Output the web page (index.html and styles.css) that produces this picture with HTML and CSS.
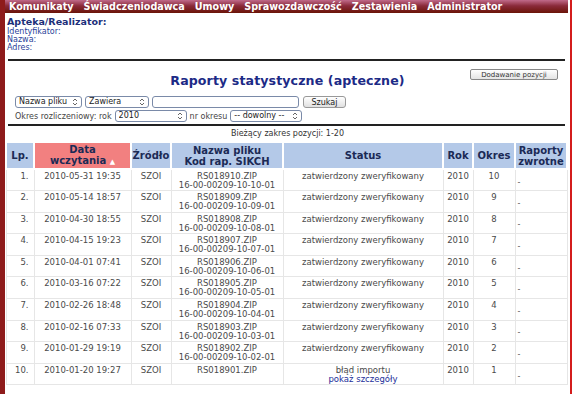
FILE: index.html
```html
<!DOCTYPE html>
<html lang="pl">
<head>
	<meta charset="UTF-8">
	<title>Raporty statystyczne (apteczne)</title>
	<link rel="stylesheet" href="styles.css">
</head>
<body>
	<div class="page">
		<div class="menu">
			<a href="#">Komunikaty</a>
			<a href="#">Świadczeniodawca</a>
			<a href="#">Umowy</a>
			<a href="#">Sprawozdawczość</a>
			<a href="#">Zestawienia</a>
			<a href="#">Administrator</a>
		</div>

		<div class="info">
			<div class="info-title">Apteka/Realizator:</div>
			<div>Identyfikator:</div>
			<div>Nazwa:</div>
			<div>Adres:</div>
		</div>

		<hr class="rule">

		<div class="heading">
			<span></span>
			<h1>Raporty statystyczne (apteczne)</h1>
			<button class="add">Dodawanie pozycji</button>
		</div>

		<form class="search">
			<div class="search-row">
				<select class="sel-field"><option>Nazwa pliku</option></select>
				<select class="sel-op"><option>Zawiera</option></select>
				<input type="text" class="query">
				<button type="button" class="go">Szukaj</button>
			</div>
			<div class="search-row">
				<span>Okres rozliczeniowy: rok</span>
				<select class="sel-year"><option>2010</option></select>
				<span>nr okresu</span>
				<select class="sel-period"><option>-- dowolny --</option></select>
			</div>
		</form>

		<hr class="rule">

		<div class="range">Bieżący zakres pozycji: 1-20</div>

		<table class="list">
			<thead>
				<tr>
					<th class="c-lp">Lp.</th>
					<th class="c-date sorted">Data<br>wczytania <span class="arrow">▲</span></th>
					<th class="c-src">Źródło</th>
					<th class="c-file">Nazwa pliku<br>Kod rap. SIKCH</th>
					<th class="c-status">Status</th>
					<th class="c-year">Rok</th>
					<th class="c-per">Okres</th>
					<th class="c-ret">Raporty<br>zwrotne</th>
				</tr>
			</thead>
			<tbody id="rows"></tbody>
		</table>
	</div>

	<script>
		const rows = [
			['2010-05-31 19:35', 'RS018910.ZIP', '16-00-00209-10-10-01', 10],
			['2010-05-14 18:57', 'RS018909.ZIP', '16-00-00209-10-09-01', 9],
			['2010-04-30 18:55', 'RS018908.ZIP', '16-00-00209-10-08-01', 8],
			['2010-04-15 19:23', 'RS018907.ZIP', '16-00-00209-10-07-01', 7],
			['2010-04-01 07:41', 'RS018906.ZIP', '16-00-00209-10-06-01', 6],
			['2010-03-16 07:22', 'RS018905.ZIP', '16-00-00209-10-05-01', 5],
			['2010-02-26 18:48', 'RS018904.ZIP', '16-00-00209-10-04-01', 4],
			['2010-02-16 07:33', 'RS018903.ZIP', '16-00-00209-10-03-01', 3],
			['2010-01-29 19:19', 'RS018902.ZIP', '16-00-00209-10-02-01', 2],
			['2010-01-20 19:27', 'RS018901.ZIP', '', 1]
		];

		const tbody = document.getElementById('rows');
		rows.forEach((r, i) => {
			const failed = r[2] === '';
			const status = failed
				? 'błąd importu<br><a href="#">pokaż szczegóły</a>'
				: 'zatwierdzony zweryfikowany';
			const tr = document.createElement('tr');
			tr.innerHTML = `
				<td class="c-lp">${i + 1}.</td>
				<td class="c-date">${r[0]}</td>
				<td class="c-src">SZOI</td>
				<td class="c-file">${r[1]}${failed ? '' : '<br>' + r[2]}</td>
				<td class="c-status">${status}</td>
				<td class="c-year">2010</td>
				<td class="c-per">${r[3]}</td>
				<td class="c-ret"><span class="dash">-</span></td>`;
			tbody.appendChild(tr);
		});
	</script>
</body>
</html>
```

FILE: styles.css
```css
body {
	margin: 0;
	font-family: "DejaVu Sans", Verdana, sans-serif;
	color: #1c2f7a;
	background: #fff;
}
.page {
	width: 565px;
	min-height: 394px;
	border-left: 5px solid #8e1b1b;
	border-right: 2px solid #d41c1c;
}
.menu {
	display: flex;
	gap: 10px;
	height: 13px;
	margin-right: 2px;
	padding-left: 4px;
	background: linear-gradient(#c06a8a, #8a2a3a 45%, #6a1408);
}
.menu a {
	color: #fff;
	font-size: 9.6px;
	font-weight: bold;
	line-height: 13px;
	text-decoration: none;
}
.info {
	padding: 3px 0 0 2px;
	font-size: 8px;
	line-height: 8px;
	color: #2a3f9a;
}
.info-title {
	font-size: 9.5px;
	font-weight: bold;
	line-height: 12px;
	color: #1c2f7a;
}
.rule {
	margin: 0 5px 0 3px;
	border: 0;
	border-top: 2px solid #222;
}
.info + .rule {
	margin-top: 7px;
}
.heading {
	display: grid;
	grid-template-columns: 1fr auto 1fr;
	align-items: start;
	height: 32px;
}
.heading h1 {
	margin: 12px 0 0;
	font-size: 12.6px;
	letter-spacing: 0.1px;
	color: #1c2a86;
}
.add {
	justify-self: end;
	margin: 8px 12px 0 0;
	width: 88px;
	height: 11px;
	padding: 0;
	font: 7px "DejaVu Sans", sans-serif;
	color: #333;
	background: linear-gradient(#fff, #e4e4e4);
	border: 1px solid #888;
	border-radius: 2px;
}
.search {
	padding: 2px 0 1px 10px;
	font-size: 8px;
	color: #444;
}
.search-row {
	display: flex;
	align-items: center;
	gap: 3px;
	height: 14px;
}
.search select,
.search input,
.search button {
	box-sizing: border-box;
	height: 12px;
	padding: 0 2px;
	font: 8px "DejaVu Sans", sans-serif;
	color: #222;
	background: #fff;
	border: 1px solid #7a8aa8;
	border-radius: 3px;
}
.search select {
	appearance: none;
	-webkit-appearance: none;
	padding: 0 10px 0 3px;
	line-height: 10px;
	background: #fff url("data:image/svg+xml;utf8,<svg xmlns='http://www.w3.org/2000/svg' width='6' height='8'><path d='M1 3 L3 1 L5 3 M1 5 L3 7 L5 5' fill='none' stroke='%23555' stroke-width='0.9'/></svg>") no-repeat right 3px center;
}
.sel-field { width: 67px; }
.sel-op { width: 64px; }
.query { width: 147px; }
.search .go {
	width: 43px;
	margin-left: 1px;
	background: linear-gradient(#fff, #e0e0e0);
	border-color: #999;
}
.sel-year { width: 72px; }
.sel-period { width: 72px; }
.range {
	padding: 3px 0 5px;
	text-align: center;
	font-size: 8px;
	color: #333;
}
.list {
	width: 563px;
	border-collapse: collapse;
	font-size: 8.5px;
}
.list th {
	height: 25px;
	padding: 0;
	font-size: 10px;
	line-height: 11px;
	color: #1b2a55;
	background: #b4c9e8;
	border: 2px solid #fff;
	border-top: 0;
}
.list th.sorted {
	background: #f28080;
}
.arrow {
	font-size: 7px;
	color: #fff;
}
.list tbody tr {
	height: 21.6px;
}
.list td {
	padding: 2px 0 0;
	vertical-align: top;
	text-align: center;
	line-height: 9px;
	color: #4a4a4a;
	border: 1px solid #e6e6e6;
}
.list td.c-lp {
	text-align: right;
	padding-right: 5px;
}
.c-lp { width: 22px; }
.c-date { width: 95px; }
.c-src { width: 38px; }
.c-file { width: 110px; }
.c-status { width: 158px; }
.c-year { width: 28px; }
.c-per { width: 40px; }
.list td.c-ret {
	text-align: left;
	vertical-align: middle;
	padding: 4px 0 0 2px;
}
.dash {
	color: #555;
	font-size: 8px;
}
.c-status a {
	color: #1c2f9a;
	text-decoration: none;
}
```
